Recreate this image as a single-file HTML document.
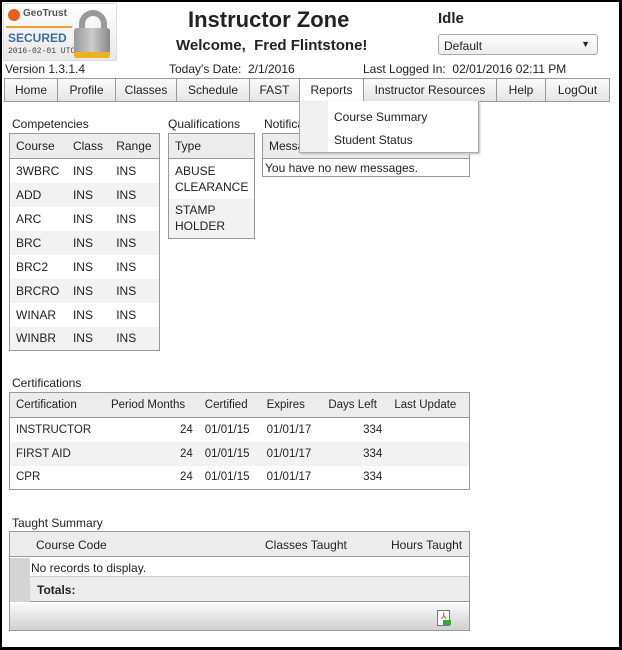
<!DOCTYPE html><html><head><style>
*{box-sizing:border-box;margin:0;padding:0}
body{width:622px;height:650px;background:#000;font-family:"Liberation Sans",sans-serif;font-size:12px;color:#222;position:relative;overflow:hidden}
#bg{position:absolute;left:2px;top:2px;width:617px;height:645px;background:#fff}
.a{position:absolute;white-space:nowrap}
table{border-collapse:collapse;position:absolute;border:1px solid #999;font-size:12px}
td,th{height:24px;padding:0 6px;font-weight:normal;text-align:left;white-space:nowrap}
th{background:#ececec;border-bottom:1px solid #999;height:25px}
tr.alt td{background:#f2f2f2}
.nav{position:absolute;top:78px;height:24px;border:1px solid #999;border-left:none;background:linear-gradient(#fbfbfb,#e4e4e4);text-align:center;line-height:22px;font-size:12px}
</style></head><body><div id="bg"></div>
<div class="a" style="left:3px;top:3px;width:114px;height:58px;background:linear-gradient(#fff,#e8e8e8);border:1px solid #ddd">
<div class="a" style="left:4px;top:5px;width:12px;height:12px;border-radius:50%;background:#e8601c"></div>
<div class="a" style="left:19px;top:4px;font-size:10px;font-weight:bold;color:#555">GeoTrust</div>
<div class="a" style="left:2px;top:22px;width:66px;height:2px;background:#f0a030"></div>
<div class="a" style="left:4px;top:27px;font-size:12px;font-weight:bold;color:#3a6ea0">SECURED</div>
<div class="a" style="left:4px;top:43px;font-size:8px;font-family:'Liberation Mono';color:#444">2016-02-01 UTC</div>
<div class="a" style="left:75px;top:6px;width:28px;height:24px;border:6px solid #999;border-bottom:none;border-radius:14px 14px 0 0"></div>
<div class="a" style="left:70px;top:24px;width:36px;height:30px;background:linear-gradient(90deg,#999,#ccc,#888);border-radius:3px;border-bottom:6px solid #f0b020"></div>
</div>
<div class="a" style="left:188px;top:7px;font-size:22px;font-weight:bold">Instructor Zone</div>
<div class="a" style="left:176px;top:37px;font-size:15px;font-weight:bold">Welcome,&nbsp; Fred Flintstone!</div>
<div class="a" style="left:438px;top:10px;font-size:15px;font-weight:bold">Idle</div>
<div class="a" style="left:438px;top:34px;width:160px;height:21px;border:1px solid #aaa;border-radius:3px;background:linear-gradient(#fff,#ececec);padding:4px 5px;font-size:12px">Default<span style="position:absolute;right:7px;top:4px;font-size:9px">▼</span></div>
<div class="a" style="left:5px;top:62px">Version 1.3.1.4</div>
<div class="a" style="left:169px;top:62px">Today's Date:&nbsp; 2/1/2016</div>
<div class="a" style="left:363px;top:62px">Last Logged In:&nbsp; 02/01/2016 02:11 PM</div>
<div class="nav" style="left:4px;width:54px;border-left:1px solid #999">Home</div>
<div class="nav" style="left:58px;width:58px">Profile</div>
<div class="nav" style="left:116px;width:61px">Classes</div>
<div class="nav" style="left:177px;width:73px">Schedule</div>
<div class="nav" style="left:250px;width:50px">FAST</div>
<div class="nav" style="left:300px;width:64px;background:#fff;border-bottom-color:#fff">Reports</div>
<div class="nav" style="left:364px;width:133px">Instructor Resources</div>
<div class="nav" style="left:497px;width:49px">Help</div>
<div class="nav" style="left:546px;width:64px">LogOut</div>
<div class="a" style="left:12px;top:117px">Competencies</div>
<div class="a" style="left:168px;top:117px">Qualifications</div>
<div class="a" style="left:264px;top:117px">Notifications</div>
<table style="left:9px;top:133px;width:151px"><tr><th>Course</th><th>Class</th><th>Range</th></tr>
<tr><td>3WBRC</td><td>INS</td><td>INS</td></tr><tr class="alt"><td>ADD</td><td>INS</td><td>INS</td></tr><tr><td>ARC</td><td>INS</td><td>INS</td></tr><tr class="alt"><td>BRC</td><td>INS</td><td>INS</td></tr><tr><td>BRC2</td><td>INS</td><td>INS</td></tr><tr class="alt"><td>BRCRO</td><td>INS</td><td>INS</td></tr><tr><td>WINAR</td><td>INS</td><td>INS</td></tr><tr class="alt"><td>WINBR</td><td>INS</td><td>INS</td></tr></table>
<table style="left:168px;top:133px;width:86px;line-height:16px"><tr><th>Type</th></tr><tr><td style="height:40px">ABUSE<br>CLEARANCE</td></tr><tr class="alt"><td style="height:40px">STAMP<br>HOLDER</td></tr></table>
<table style="left:262px;top:133px;width:208px"><tr><th>Message</th></tr><tr><td style="padding:0 2px;height:18px">You have no new messages.</td></tr></table>
<div class="a" style="left:299px;top:101px;width:180px;height:52px;background:#fff;border:1px solid #aaa;border-top:none;box-shadow:1px 1px 2px #bbb">
<div class="a" style="left:0;top:0;width:28px;height:51px;background:#f0f0f0"></div>
<div class="a" style="left:34px;top:9px">Course Summary</div><div class="a" style="left:34px;top:32px">Student Status</div></div>
<div class="a" style="left:12px;top:376px">Certifications</div>
<table style="left:9px;top:392px;width:461px;font-size:11.5px"><tr><th>Certification</th><th>Period Months</th><th>Certified</th><th>Expires</th><th>Days Left</th><th>Last Update</th></tr>
<tr><td>INSTRUCTOR</td><td style="text-align:right">24</td><td>01/01/15</td><td>01/01/17</td><td style="text-align:right">334</td><td></td></tr>
<tr class="alt"><td>FIRST AID</td><td style="text-align:right">24</td><td>01/01/15</td><td>01/01/17</td><td style="text-align:right">334</td><td></td></tr>
<tr><td>CPR</td><td style="text-align:right">24</td><td>01/01/15</td><td>01/01/17</td><td style="text-align:right">334</td><td></td></tr></table>
<div class="a" style="left:12px;top:516px">Taught Summary</div>
<div class="a" style="left:9px;top:531px;width:461px;height:100px;border:1px solid #999">
<div class="a" style="left:0;top:0;width:459px;height:25px;background:#ececec;border-bottom:1px solid #999"></div>
<div class="a" style="left:26px;top:6px">Course Code</div><div class="a" style="left:255px;top:6px">Classes Taught</div><div class="a" style="left:381px;top:6px">Hours Taught</div>
<div class="a" style="left:0;top:26px;width:20px;height:44px;background:#d4d4d4"></div>
<div class="a" style="left:21px;top:29px">No records to display.</div>
<div class="a" style="left:20px;top:44px;width:439px;height:26px;background:#ececec;border-top:1px solid #ccc;border-bottom:1px solid #999"></div>
<div class="a" style="left:27px;top:51px;font-weight:bold">Totals:</div>
<div class="a" style="left:0;top:71px;width:459px;height:27px;background:linear-gradient(#fafafa,#d0d0d0)"></div>
<div class="a" style="left:427px;top:78px;width:13px;height:16px;border:1px solid #777;background:#fff"><div class="a" style="left:3px;top:0px;color:#d22;font-size:9px">⅄</div><div class="a" style="left:5px;top:9px;width:8px;height:5px;background:#3a3"></div></div>
</div>
</body></html>
